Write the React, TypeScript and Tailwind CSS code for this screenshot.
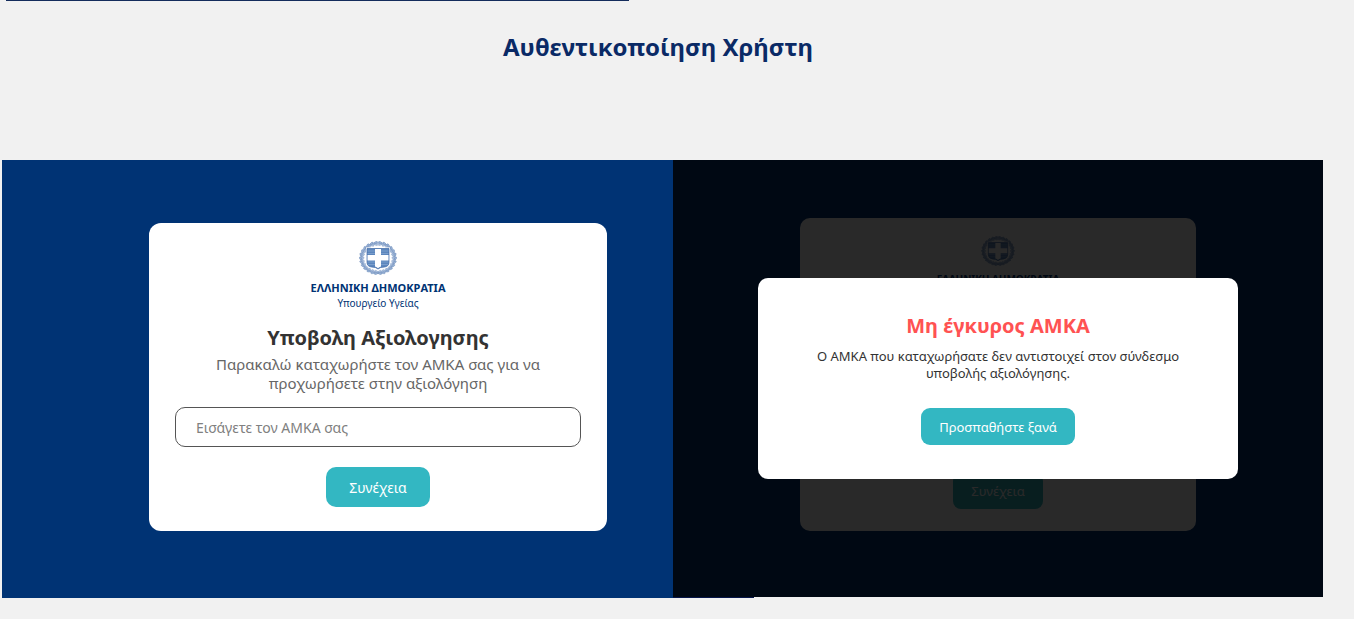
import { useState } from "react";
import { clsx } from "clsx";

// Angles (degrees, clockwise from the top) of the leaf pairs on the wreath
const LEAF_ANGLES = [
  8, 22, 36, 50, 64, 78, 92, 106, 120, 134, 148, 162, 174,
  186, 198, 212, 226, 240, 254, 268, 282, 296, 310, 324, 338, 352
];

function Emblem({ className }: { className?: string }) {
  return (
    <svg viewBox="0 0 76 68" className={className} aria-hidden="true">
      {/* Laurel wreath */}
      <ellipse cx="38" cy="34" rx="33" ry="29.5" fill="none" stroke="#a3b8d8" strokeWidth="5" />
      {LEAF_ANGLES.map((angle) => (
        <g key={angle} transform={`translate(38 34) scale(1.12 1) rotate(${angle})`}>
          <ellipse cx="0" cy="-31" rx="1.7" ry="3.6" transform={`rotate(${angle < 180 ? -62 : 62} 0 -31)`} fill="#9db4d6" stroke="#5f82b5" strokeWidth="0.8" />
          <ellipse cx="0" cy="-27" rx="1.4" ry="3.2" transform={`rotate(${angle < 180 ? -118 : 118} 0 -27)`} fill="#b6c7e0" stroke="#6f90bf" strokeWidth="0.7" />
        </g>
      ))}

      {/* Shield with the cross */}
      <path d="M14 13 H62 V43 Q62 53 52 54 Q42 54 38 58 Q34 54 24 54 Q14 53 14 43 Z" fill="#fff" />
      <path d="M16 15 H60 V42 Q60 51 51 52 Q42 52 38 56 Q34 52 25 52 Q16 51 16 42 Z" fill="#5c86bd" stroke="#3f68a6" strokeWidth="1.4" />
      <path d="M17 20 H59 M17 25 H59 M17 42 H59 M18 47 H58" stroke="#8fafd6" strokeWidth="1.2" />
      <path d="M32 16 H44 V28 H59 V39 H44 V51 Q40 52 38 54.5 Q36 52 32 51 V39 H17 V28 H32 Z" fill="#fff" />
    </svg>
  );
}

interface AssessmentCardProps {
  id: string;
  // Smaller version, shown behind the dialog
  compact?: boolean;
}

function AssessmentCard({ id, compact = false }: AssessmentCardProps) {
  const [amka, setAmka] = useState("");

  return (
    <form
      onSubmit={(e) => e.preventDefault()}
      className={clsx(
        "flex w-full flex-col items-center bg-white",
        compact ? "rounded-[10px] px-6 pt-[18px] pb-[22px]" : "rounded-xl px-[26px] pt-[18px] pb-6"
      )}
    >
      <Emblem className={compact ? "h-[30px] w-[34px]" : "h-[34px] w-[38px]"} />
      <p className={clsx("font-bold text-[#003374]", compact ? "mt-[5px] text-[10px] leading-4" : "mt-[5px] text-[11px] leading-4")}>
        ΕΛΛΗΝΙΚΗ ΔΗΜΟΚΡΑΤΙΑ
      </p>
      <p className={clsx("text-[#003374]", compact ? "invisible text-[9px] leading-3" : "text-[10px] leading-[14px]")}>
        Υπουργείο Υγείας
      </p>
      <h2 className={clsx("font-bold text-[#333333]", compact ? "invisible mt-5 text-base leading-6" : "mt-4 text-xl leading-6")}>
        Υποβολη Αξιολογησης
      </h2>
      <label
        htmlFor={id}
        className={clsx("text-center text-[#666666]", compact ? "invisible mt-2 text-[13px] leading-5" : "mt-[5px] px-6 text-[15px] leading-[19px]")}
      >
        Παρακαλώ καταχωρήστε τον ΑΜΚΑ σας για να προχωρήσετε στην αξιολόγηση
      </label>
      <input
        id={id}
        type="text"
        value={amka}
        onChange={(e) => setAmka(e.target.value)}
        placeholder="Εισάγετε τον ΑΜΚΑ σας"
        className={clsx(
          "w-full border border-[#555555] px-5 text-[#333333] placeholder:text-[#808080]",
          compact ? "invisible mt-5 h-9 rounded-lg text-xs" : "mt-[14px] h-10 rounded-[10px] text-sm"
        )}
      />
      <button
        type="submit"
        className={clsx(
          "bg-[#33b7c2] pt-[2px] text-white",
          compact ? "mt-[26px] h-9 w-[90px] rounded-lg text-[13px]" : "mt-5 h-10 w-[104px] rounded-[10px] text-sm"
        )}
      >
        Συνέχεια
      </button>
    </form>
  );
}

function InvalidAmkaDialog() {
  return (
    <div className="absolute inset-0 flex items-center justify-center bg-black/84">
      <div
        role="alertdialog"
        aria-labelledby="invalid-title"
        aria-describedby="invalid-text"
        className="flex w-full max-w-[480px] flex-col items-center rounded-[10px] bg-white px-12 pt-9 pb-[34px]"
      >
        <h2 id="invalid-title" className="text-xl leading-6 font-bold text-[#ff5252]">
          Μη έγκυρος ΑΜΚΑ
        </h2>
        <p id="invalid-text" className="mt-[10px] text-center text-[13px] leading-[17px] text-[#333333]">
          Ο ΑΜΚΑ που καταχωρήσατε δεν αντιστοιχεί στον σύνδεσμο υποβολής αξιολόγησης.
        </p>
        <button type="button" className="mt-[26px] h-[37px] rounded-[9px] bg-[#33b7c2] px-[18px] pt-[2px] text-[13px] text-white">
          Προσπαθήστε ξανά
        </button>
      </div>
    </div>
  );
}

export default function App() {
  return (
    <div className="min-h-screen bg-[#f1f1f1] font-['Noto_Sans',sans-serif]">
      <div className="ml-[6px] h-px w-[46%] bg-[#142c5c]" />

      <h1 className="pt-7 pr-[38px] text-center text-2xl leading-9 font-bold text-[#0a2a66]">
        Αυθεντικοποίηση Χρήστη
      </h1>

      <main className="mt-[95px] mr-[31px] ml-[2px] grid grid-cols-[671fr_650fr]">
        <section className="flex items-center bg-[#003374] pt-[63px] pr-[66px] pb-[67px] pl-[147px]">
          <AssessmentCard id="amka" />
        </section>

        <section className="flex flex-col">
          <div className="relative flex flex-1 items-end bg-[#003374] px-[127px] pb-[66px]">
            <AssessmentCard id="amka-dimmed" compact />
            <InvalidAmkaDialog />
          </div>
          <div className="h-px w-[81px] bg-[#06164a]" />
        </section>
      </main>
    </div>
  );
}
